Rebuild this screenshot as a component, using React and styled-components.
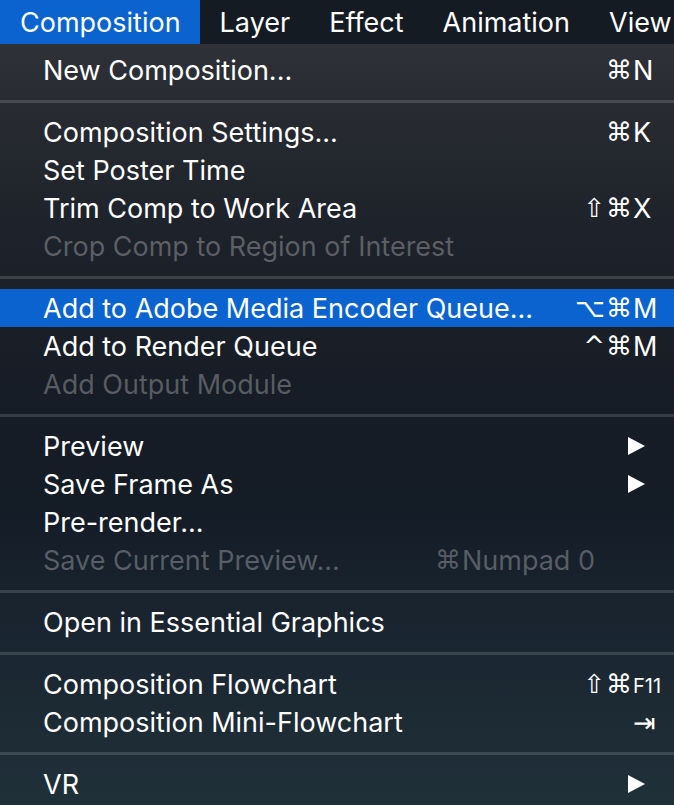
import React from "react";
import styled, { createGlobalStyle } from "styled-components";

const GlobalStyle = createGlobalStyle`
  html, body {
    margin: 0;
    padding: 0;
    background: #1a1f27;
  }
  body {
    font-family: Inter, "Noto Sans", "DejaVu Sans", sans-serif;
    -webkit-font-smoothing: antialiased;
  }
`;

const menuBar = ["Composition", "Layer", "Effect", "Animation", "View"];

const groups = [
  [{ label: "New Composition...", mods: "⌘", keyName: "N" }],
  [
    { label: "Composition Settings...", mods: "⌘", keyName: "K" },
    { label: "Set Poster Time" },
    { label: "Trim Comp to Work Area", mods: "⇧⌘", keyName: "X" },
    { label: "Crop Comp to Region of Interest", disabled: true },
  ],
  [
    { label: "Add to Adobe Media Encoder Queue...", mods: "⌥⌘", keyName: "M", active: true },
    { label: "Add to Render Queue", mods: "^⌘", keyName: "M" },
    { label: "Add Output Module", disabled: true },
  ],
  [
    { label: "Preview", submenu: true },
    { label: "Save Frame As", submenu: true },
    { label: "Pre-render..." },
    { label: "Save Current Preview...", disabled: true, mods: "⌘", keyName: "Numpad 0", wide: true },
  ],
  [{ label: "Open in Essential Graphics" }],
  [
    { label: "Composition Flowchart", mods: "⇧⌘", keyName: "F11", small: true },
    { label: "Composition Mini-Flowchart", keyName: "⇥", glyph: true },
  ],
  [{ label: "VR", submenu: true }],
];

const App = () => {
  return (
    <>
      <GlobalStyle />
      <Screen>
        <MenuBar>
          {menuBar.map((name, i) => (
            <BarItem key={name} $open={i === 0}>
              {name}
            </BarItem>
          ))}
        </MenuBar>
        <Menu>
          {groups.map((group, gi) => (
            <React.Fragment key={gi}>
              {gi > 0 && <Separator />}
              {group.map((item) => (
                <Row key={item.label} $active={item.active} $disabled={item.disabled}>
                  <Label>{item.label}</Label>
                  {item.submenu && (
                    <Arrow viewBox="0 0 17 18">
                      <path d="M0 0 L17 9 L0 18 Z" fill="currentColor" />
                    </Arrow>
                  )}
                  {item.keyName && (
                    <Shortcut $wide={item.wide}>
                      {item.mods && <Mods>{item.mods}</Mods>}
                      <Key $small={item.small} $glyph={item.glyph}>
                        {item.keyName}
                      </Key>
                    </Shortcut>
                  )}
                </Row>
              ))}
            </React.Fragment>
          ))}
        </Menu>
      </Screen>
    </>
  );
};

export default App;

const Screen = styled.div`
  width: 674px;
  height: 805px;
  overflow: hidden;
  display: flex;
  flex-direction: column;
  background: linear-gradient(
    180deg,
    #35373c 0%,
    #2a2d33 10%,
    #1e222a 28%,
    #171d26 48%,
    #141c26 62%,
    #1a2631 80%,
    #203039 100%
  );
`;

const MenuBar = styled.div`
  height: 44px;
  flex-shrink: 0;
  display: flex;
  background: #151b23;
  white-space: nowrap;
`;

const BarItem = styled.div`
  padding: 0 19px 0 20px;
  display: flex;
  align-items: center;
  font-size: 27px;
  color: #ffffff;
  background: ${(p) => (p.$open ? "#0a63cf" : "transparent")};
`;

const Menu = styled.div`
  padding-top: 7px;
  display: flex;
  flex-direction: column;
`;

const Separator = styled.div`
  height: 3px;
  margin: 11px 0 10px;
  background: rgba(255, 255, 255, 0.14);
`;

const Row = styled.div`
  height: 38px;
  display: flex;
  align-items: center;
  padding: 0 11px 0 43px;
  font-size: 27px;
  color: ${(p) => (p.$disabled ? "rgba(255, 255, 255, 0.28)" : "#ffffff")};
  background: ${(p) => (p.$active ? "#0a63cf" : "transparent")};
  white-space: nowrap;
`;

const Label = styled.span`
  flex: 1;
`;

const Arrow = styled.svg`
  width: 17px;
  height: 18px;
  margin-right: 18px;
  color: #ffffff;
`;

const Shortcut = styled.span`
  display: flex;
  align-items: center;
  margin-right: ${(p) => (p.$wide ? "68px" : "0")};
`;

const Mods = styled.span`
  font-family: "DejaVu Sans", sans-serif;
  font-size: 26px;
  letter-spacing: 1px;
`;

const Key = styled.span`
  min-width: 30px;
  font-size: ${(p) => (p.$small ? "20px" : "27px")};
  font-family: ${(p) => (p.$glyph ? '"DejaVu Sans", sans-serif' : "inherit")};
  padding-top: ${(p) => (p.$small ? "4px" : "0")};
`;
